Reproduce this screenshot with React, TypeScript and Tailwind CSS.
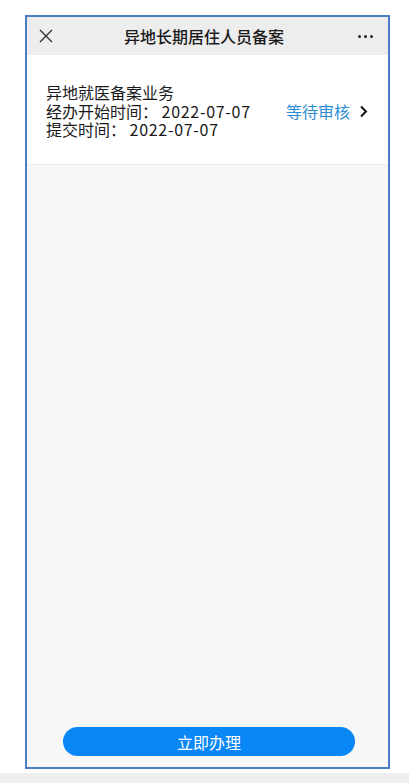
export default function App() {
  const font = { fontFamily: '"Noto Sans CJK SC", "Noto Sans", sans-serif' };
  return (
    <div className="w-full h-[783px] bg-white flex flex-col" style={font}>
      <div className="ml-[25px] mt-[15px] w-[365px] h-[754px] border-2 border-[#4a7ec2] flex flex-col bg-[#f7f7f7]">
        {/* header */}
        <div className="h-[38px] bg-[#ededed] flex items-center px-[11px] shrink-0">
          <svg width="14" height="14" viewBox="0 0 14 14" className="ml-[1px]">
            <path d="M1 1 L13 13 M13 1 L1 13" stroke="#333" strokeWidth="1.4" fill="none" />
          </svg>
          <div className="flex-1 text-center text-[16px] leading-none font-medium text-[#1a1a1a] pr-[3px]">异地长期居住人员备案</div>
          <div className="flex gap-[3px] mr-[4px]">
            <span className="w-[3px] h-[3px] rounded-full bg-[#222]" />
            <span className="w-[3px] h-[3px] rounded-full bg-[#222]" />
            <span className="w-[3px] h-[3px] rounded-full bg-[#222]" />
          </div>
        </div>

        {/* record card */}
        <div className="h-[110px] bg-white border-b border-[#ececec] flex items-center pl-[19px] pr-[20px] shrink-0">
          <div className="flex-1 text-[16px] leading-[18.5px] text-[#1a1a1a] pt-[3px]">
            <div>异地就医备案业务</div>
            <div>
              经办开始时间：&nbsp;<span className="tracking-[0.7px]">2022-07-07</span>
            </div>
            <div>
              提交时间：&nbsp;<span className="tracking-[0.7px]">2022-07-07</span>
            </div>
          </div>
          <div className="flex items-center gap-[9px] pt-[3px]">
            <span className="text-[16px] text-[#2b8bd3]">等待审核</span>
            <svg width="9" height="13" viewBox="0 0 9 13">
              <path d="M2 1.5 L7 6.5 L2 11.5" stroke="#111" strokeWidth="2" fill="none" />
            </svg>
          </div>
        </div>

        <div className="flex-1" />

        <div className="pb-[11px] pl-[36px]">
          <button className="w-[292px] h-[29px] rounded-full bg-[#0a87f6] text-white text-[16px] leading-none">
            立即办理
          </button>
        </div>
      </div>
      <div className="h-[4px]" />
      <div className="h-[10px] bg-[#efefef]" />
    </div>
  );
}
